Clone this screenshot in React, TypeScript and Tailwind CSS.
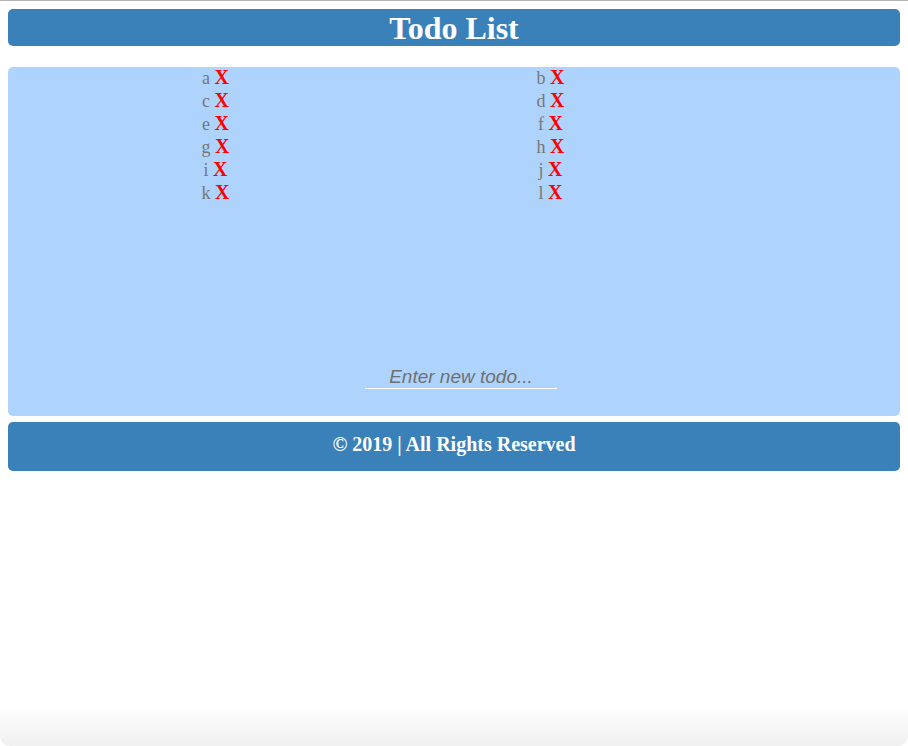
import React from "react";

const items = ["a", "b", "c", "d", "e", "f", "g", "h", "i", "j", "k", "l"];

export default function App() {
  return (
    <div className="w-[908px] h-[746px] bg-white border-t border-[#b4b4b4] relative overflow-hidden" style={{ fontFamily: '"Liberation Serif", "Times New Roman", serif' }}>
      <div className="px-2 pt-2">
        <div className="h-[37px] bg-[#3a80b9] rounded-[5px] flex items-center justify-center">
          <h1 className="text-white font-bold text-[32px] leading-none">Todo List</h1>
        </div>
        <div className="mt-[21px] h-[349px] bg-[#aed4fd] rounded-[5px] flex flex-col">
          <ul className="ml-[40px] -mt-[1px] grid grid-cols-[335px_335px] text-center text-[18px] leading-[23px]">
            {items.map((it) => (
              <li key={it} className="h-[23px] leading-[23px]">
                <span className="text-[#777777]">{it}</span>{" "}
                <span className="text-[#ff0000] font-bold text-[20px] leading-[23px]">X</span>
              </li>
            ))}
          </ul>
          <div className="mt-auto mb-[27px] flex justify-center pl-[14px]">
            <input
              placeholder="Enter new todo..."
              className="w-[192px] bg-transparent border-b border-white text-center italic text-[19px] leading-[22px] outline-none placeholder:text-[#707070]"
              style={{ fontFamily: '"Liberation Sans", Arial, sans-serif' }}
            />
          </div>
        </div>
        <div className="mt-[6px] h-[49px] bg-[#3a80b9] rounded-[5px] flex items-center justify-center pb-[5px]">
          <p className="text-white font-bold text-[20px] leading-none">© 2019 | All Rights Reserved</p>
        </div>
      </div>
      <div className="absolute left-0 right-0 bottom-0 h-[40px] bg-gradient-to-b from-transparent to-[#f0f0f0] rounded-b-[10px]" />
    </div>
  );
}
